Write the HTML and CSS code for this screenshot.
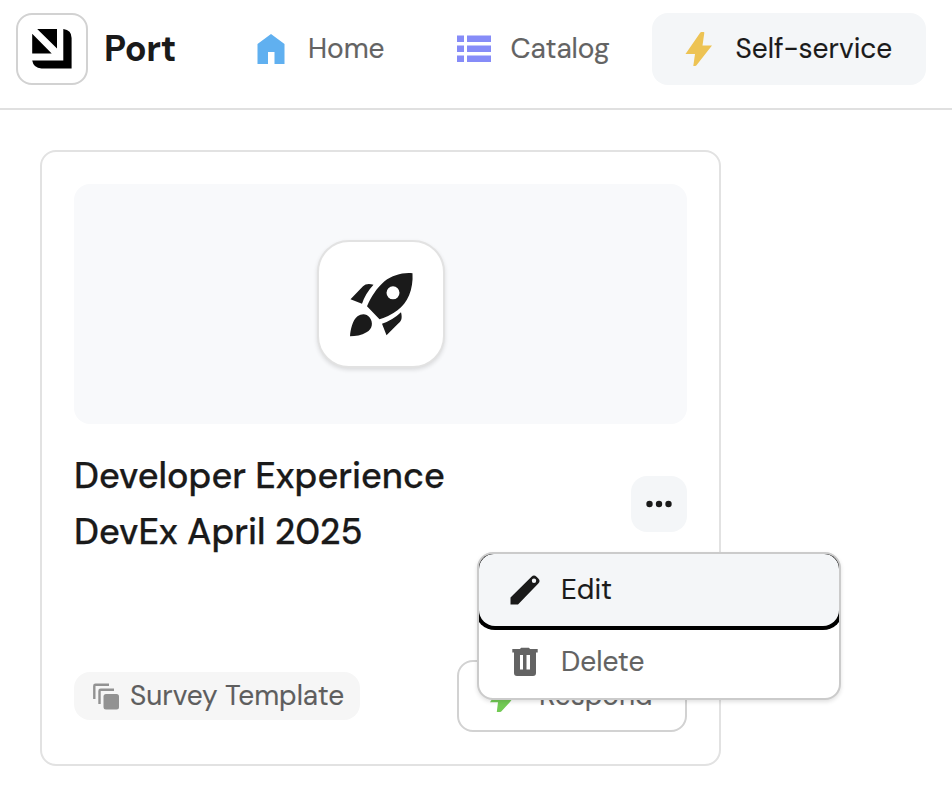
FILE: index.html
```html
<!DOCTYPE html>
<html lang="en">
<head>
<meta charset="utf-8">
<title>Port</title>
<link rel="stylesheet" href="styles.css">
</head>
<body>
<header class="topbar">
  <div class="logo">
    <svg width="40" height="40" viewBox="0 0 40 40"><path d="M5.200 0H25V19.500ZM0.200 4.800L19.700 24.500H0.200ZM31.300 0q8.300 1 8.300 9v30.500H9.500q-8-.5-9.300-8H31.300Z"/></svg>
  </div>
  <div class="brand">Port</div>
  <nav class="nav">
    <a class="nav-item home">
      <svg width="34" height="34" viewBox="0 0 34 34"><path fill="#60b0f0" d="M17 2L30.500 12v20H20.500V20h-6.500v12H3.500V12Z"/></svg>
      <span>Home</span>
    </a>
    <a class="nav-item catalog">
      <svg width="34" height="34" viewBox="0 0 34 34"><path fill="#868cf8" d="M0 3.500h7v6.500H0zM10 3.500h24v6.500H10zM0 13.500h7v6.500H0zM10 13.500h24v6.500H10zM0 23.500h7v6.500H0zM10 23.500h24v6.500H10z"/></svg>
      <span>Catalog</span>
    </a>
    <a class="nav-item active">
      <svg width="34" height="34" viewBox="0 0 34 34"><path fill="#edc354" d="M19.500 0H21.500Q22.500 0 22.300 1L20.500 13.500H30L14.500 33.200Q14 34 13 34H11.300L13 22H3.500L18 .900Q18.600 0 19.500 0Z"/></svg>
      <span>Self-service</span>
    </a>
  </nav>
</header>
<main class="content">
  <article class="card">
    <div class="cover">
      <div class="cover-icon">
        <svg width="66" height="66" viewBox="0 0 66 66"><path fill="#1a1a1a" fill-rule="evenodd" transform="translate(.5 .3)" d="M64 2C65 18 59 32 49 39Q41 45 31 48L18.500 35C23 25 28 17 36 10C44 4 54 1 64 2ZM44.500 15a6.500 6.500 0 1 0 0 13a6.500 6.500 0 1 0 0-13ZM2 28L14.500 15Q18 11.500 25 13.500Q17 22 13.500 32.500ZM52.500 41C54 47 53 50 49 53L38 64L33.500 52.500Q44 49 52.500 41ZM1.500 65C2 58 4 49 9 45C13 42 18 42 21 46C25 51 24 58 18 61C13 64 7 65 1.500 65Z"/></svg>
      </div>
    </div>
    <div class="heading">
      <h2><span class="line">Developer Experience</span><span class="line">DevEx April 2025</span></h2>
      <div class="actions">
        <button class="more" aria-label="More">
          <svg width="28" height="8" viewBox="0 0 28 8"><g fill="#1a1a1a"><circle cx="4.500" cy="4" r="3.200"/><circle cx="14" cy="4" r="3.200"/><circle cx="23.500" cy="4" r="3.200"/></g></svg>
        </button>
        <div class="menu">
          <div class="menu-item focused">
            <svg width="30" height="30" viewBox="0 0 30 30"><path fill="#1a1a1a" fill-rule="evenodd" d="M.5 22.500L21.500 1.700Q24-.8 26.500 1.700L28.300 3.500Q30.800 6 28.300 8.500L8 29.500H.5ZM24 3.600a2.200 2.200 0 1 0 0 4.400a2.200 2.200 0 1 0 0-4.400Z"/></svg>
            <span>Edit</span>
          </div>
          <div class="menu-item">
            <svg width="30" height="30" viewBox="0 0 30 30"><path fill="#636363" fill-rule="evenodd" d="M2.300 2H10L11 .700h8l1 1.300H27.700V5.500H26V26Q26 29 23 29H7Q4 29 4 26V5.500H2.300ZM10 8v14.500H13v-14.500ZM16.500 8v14.500H20v-14.500Z"/></svg>
            <span>Delete</span>
          </div>
        </div>
      </div>
    </div>
    <footer class="card-footer">
      <div class="tag">
        <svg width="27" height="27" viewBox="0 0 27 27"><g fill="none" stroke="#929292" stroke-width="2.400"><path d="M2.300 16V3Q2.300 1.800 3.500 1.800H17M7.500 21V8Q7.500 6.800 8.700 6.800H22"/></g><rect x="11.500" y="11" width="15.500" height="15.500" rx="2.500" fill="#929292"/></svg>
        <span>Survey Template</span>
      </div>
      <button class="respond">
        <svg width="34" height="34" viewBox="0 0 34 34"><path fill="#72ca54" d="M19.500 0H21.500Q22.500 0 22.300 1L20.500 14.500H30L23 24L14.500 33.200Q14 34 13 34H9.800L11 24.300H3L18 .900Q18.600 0 19.500 0Z"/></svg>
        <span>Respond</span>
      </button>
    </footer>
  </article>
</main>
</body>
</html>
```

FILE: styles.css
```css
* { box-sizing: border-box; }
body {
  margin: 0;
  background: #fff;
  color: #1a1a1a;
  font-family: "DM Sans", Inter, sans-serif;
  font-size: 28px;
  line-height: 36px;
  -webkit-text-stroke: .15px currentColor;
}
svg { display: block; flex: none; }
span { white-space: nowrap; }
button { font: inherit; color: inherit; padding: 0; }
.topbar {
  height: 110px;
  padding: 13px 26px 23px 16px;
  border-bottom: 2px solid #e0e0e0;
  display: flex;
  align-items: center;
}
.logo {
  width: 72px;
  height: 72px;
  flex: none;
  border: 2px solid #d2d2d2;
  border-radius: 16px;
  display: grid;
  place-items: center;
}
.brand {
  width: 132px;
  margin-left: 16px;
  font-size: 36px;
  font-weight: 700;
  letter-spacing: -.4px;
  -webkit-text-stroke: 0;
}
.nav { display: flex; color: #636363; }
.nav-item {
  height: 72px;
  display: flex;
  align-items: center;
  gap: 19.5px;
}
.home { width: 221px; padding-left: 18px; gap: 20px; }
.catalog { width: 195px; }
.nav-item.active {
  width: 274px;
  padding-left: 30px;
  border-radius: 16px;
  background: #f4f6f8;
  color: #1a1a1a;
}
.content { padding: 40px; }
.card {
  width: 681px;
  height: 616px;
  padding: 32px;
  border: 2px solid #e2e2e2;
  border-radius: 16px;
  display: flex;
  flex-direction: column;
}
.cover {
  height: 240px;
  flex: none;
  border-radius: 16px;
  background: #f8f9fb;
  display: grid;
  place-items: center;
}
.cover-icon {
  width: 128px;
  height: 128px;
  border: 2px solid #e2e2e2;
  border-radius: 32px;
  background: #fff;
  box-shadow: 0 2px 4px rgba(0, 0, 0, .12);
  display: grid;
  place-items: center;
}
.heading {
  margin-top: 24px;
  display: flex;
  align-items: center;
  justify-content: space-between;
}
h2 { margin: 0; font-size: 36px; line-height: 56px; font-weight: 500; -webkit-text-stroke: .25px currentColor; }
.line { display: block; }
.actions { position: relative; }
.more {
  width: 56px;
  height: 56px;
  border: 0;
  border-radius: 16px;
  background: #f4f6f8;
  display: grid;
  place-items: center;
}
.menu {
  position: absolute;
  z-index: 2;
  top: 76px;
  right: -154px;
  width: 364px;
  height: 148px;
  border: 2px solid #cbcbcb;
  border-radius: 16px;
  background: #fff;
  overflow: hidden;
  box-shadow: 0 2px 4px rgba(0, 0, 0, .12);
}
.menu-item {
  height: 72px;
  padding: 0 31px;
  display: flex;
  align-items: center;
  gap: 21px;
  color: #636363;
}
.menu-item.focused {
  position: relative;
  border-radius: 15px 15px 16px 16px;
  background: #f4f6f8;
  color: #1a1a1a;
  box-shadow: 0 0 0 4px #000;
}
.card-footer {
  margin-top: auto;
  display: flex;
  align-items: center;
  justify-content: space-between;
}
.tag {
  width: 286px;
  height: 48px;
  padding-left: 18px;
  border-radius: 16px;
  background: #f6f6f6;
  color: #5e5e5e;
  display: flex;
  align-items: center;
  gap: 11px;
}
.respond {
  width: 230px;
  height: 72px;
  padding-left: 28px;
  border: 2px solid #d2d2d2;
  border-radius: 16px;
  background: #fff;
  color: #636363;
  display: flex;
  align-items: center;
  gap: 18px;
}
.respond svg { margin-bottom: 2px; }
```
